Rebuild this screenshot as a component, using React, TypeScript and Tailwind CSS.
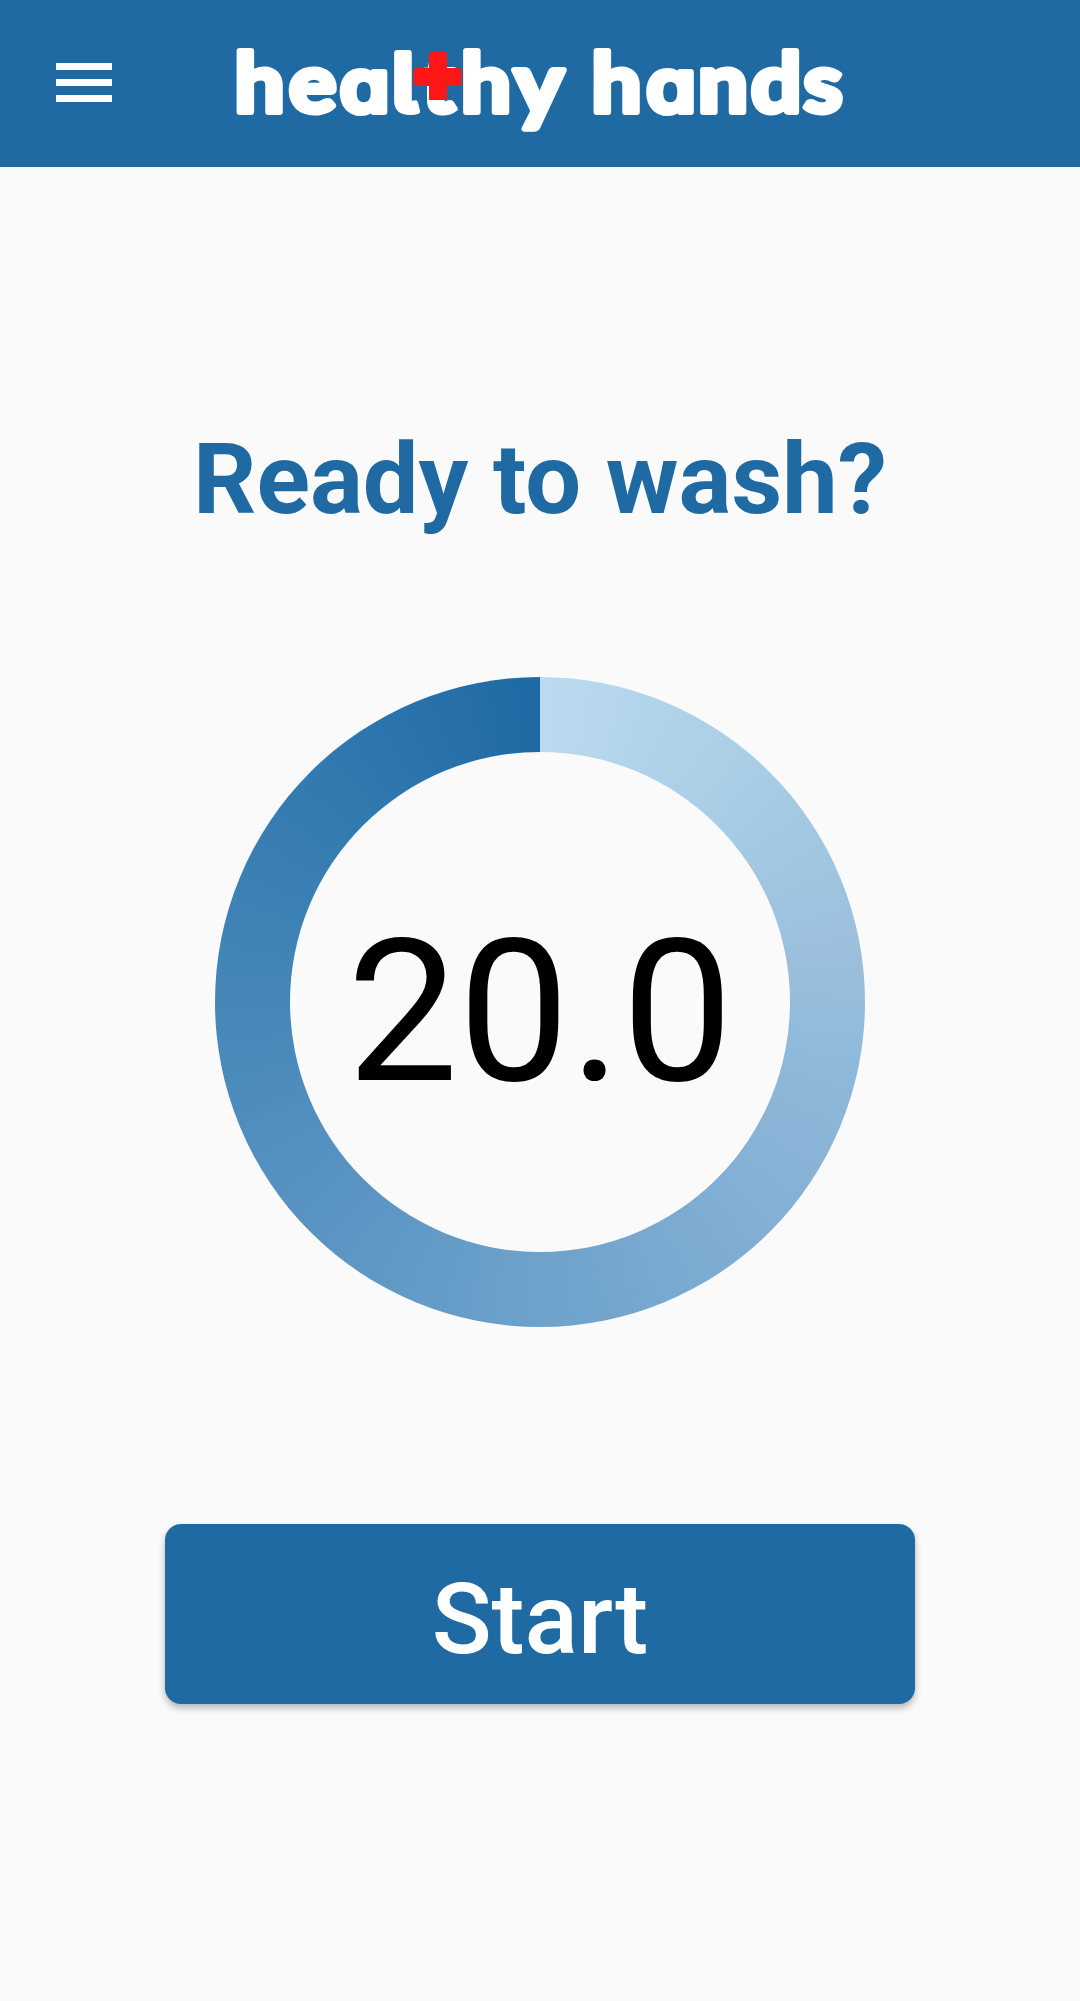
const STRETCH = 1.08;

const lato = "font-['Lato',sans-serif] font-bold text-[82px]";
const latoY = "font-['Lato',sans-serif] font-bold text-[87px]";
const interA = "font-['Inter',sans-serif] font-semibold text-[74px] [font-feature-settings:'cv11']";
const interL = "font-['Inter',sans-serif] font-semibold text-[81px] [font-feature-settings:'cv05']";

const glyphs: [string, number, number, string][] = [
  ["h", 234.5, 112, lato],
  ["e", 289, 112, lato],
  ["a", 339.5, 112, interA],
  ["l", 391.5, 112, interL],
  ["t", 422, 112, lato],
  ["h", 461, 112, lato],
  ["y", 514, 114, latoY],
  [" ", 565, 112, lato],
  ["h", 591.5, 112, lato],
  ["a", 646, 112, interA],
  ["n", 698, 112, lato],
  ["d", 751, 112, lato],
  ["s", 803.5, 112, lato],
];

function Logo() {
  return (
    <svg width="640" height="120" viewBox="220 30 640 120" className="block" role="img" aria-label="healthy hands">
      <text
        transform={`scale(${STRETCH} 1)`}
        fill="#fff"
        stroke="#fff"
        strokeWidth="6"
        strokeLinejoin="round"
        className="whitespace-pre"
      >
        {glyphs.map(([char, x, y, style], i) => (
          <tspan key={i} x={x / STRETCH} y={y + 0.5} className={style}>
            {char}
          </tspan>
        ))}
      </text>
      <path
        d="M432 52h12q3 0 3 3v13h11.500q3 0 3 3v12q0 3-3 3h-11.500v14h-18V86h-12.500q-3 0-3-3V71q0-3 3-3h12.500V55q0-3 3-3z"
        fill="#ff1717"
      />
    </svg>
  );
}

export default function App() {
  return (
    <div className="flex h-[2001px] w-[1080px] flex-col items-center overflow-hidden bg-[#fafafa] font-['Roboto',sans-serif]">
      <header className="flex h-[167px] w-full shrink-0 items-center bg-[#206aa3] pl-14">
        <button aria-label="Menu" className="-mt-0.5 flex w-14 flex-col gap-[9px]">
          <span className="h-[7px] bg-white" />
          <span className="h-[7px] bg-white" />
          <span className="h-[7px] bg-white" />
        </button>
        <div className="ml-[108px] mt-[13px]">
          <Logo />
        </div>
      </header>
      <h1 className="mt-[254px] h-[116px] whitespace-nowrap text-[99px] font-bold leading-[116px] text-[#206aa3]">
        Ready to wash?
      </h1>
      <div className="mt-[140px] flex size-[650px] shrink-0 items-center justify-center rounded-full bg-[conic-gradient(#bbdaef_0deg,#a9cee6_40deg,#98bcdb_88deg,#92bbdc_94deg,#7eacd1_145deg,#6da2cb_180deg,#5c95c3_220deg,#4587b9_270deg,#327ab0_315deg,#266fa9_345deg,#1f6aa4_360deg)]">
        <div className="flex size-[500px] items-center justify-center rounded-full bg-[#fafafa]">
          <span className="mt-5 text-[198px] leading-[232px] text-black">20.0</span>
        </div>
      </div>
      <button className="mt-[197px] flex h-[180px] w-[750px] shrink-0 items-center justify-center rounded-2xl bg-[#206aa3] pt-2.5 text-[99px] font-medium leading-[116px] text-white shadow-[0_4px_7px_rgba(0,0,0,0.28)]">
        Start
      </button>
    </div>
  );
}
